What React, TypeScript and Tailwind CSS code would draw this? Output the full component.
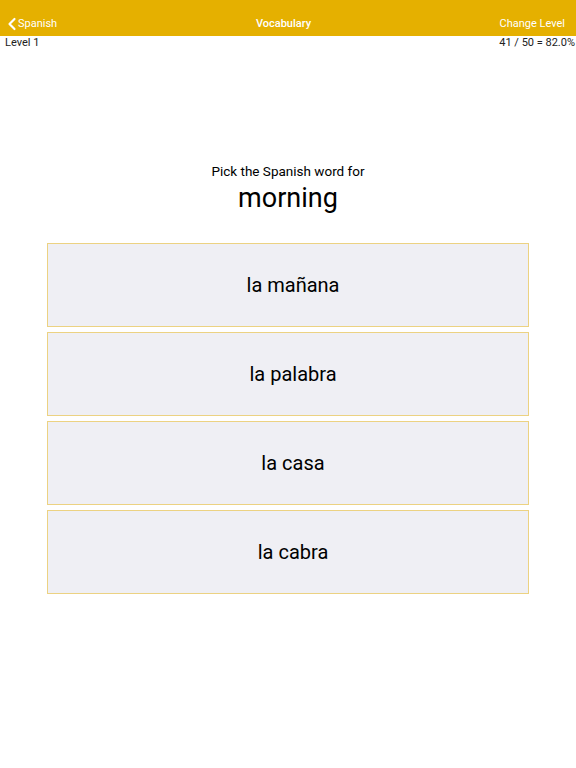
import { ChevronLeft } from 'lucide-react'

const CHOICES = ['la mañana', 'la palabra', 'la casa', 'la cabra']

export default function App() {
  return (
    <div className="min-h-[768px] bg-white text-black font-['Roboto',_'Inter',_sans-serif]">
      {/* Nav bar */}
      <div className="h-9 bg-[#e5b000] flex items-center pt-[11px] px-[2px] text-white text-[11px] leading-[13px]">
        <div className="flex-1 flex items-center">
          <ChevronLeft className="w-5 h-5 -mr-[4px]" strokeWidth={2.6} />
          <span>Spanish</span>
        </div>
        <div className="flex-1 text-center font-medium">Vocabulary</div>
        <div className="flex-1 text-right pr-[9px]">Change Level</div>
      </div>

      {/* Status row */}
      <div className="flex justify-between pl-[5px] pr-[1px] text-[11px] leading-[13px] text-[#222]">
        <span>Level 1</span>
        <span>41 / 50 = 82.0%</span>
      </div>

      {/* Prompt */}
      <div className="mt-[113px] flex flex-col items-center">
        <div className="text-[13.5px] leading-[18px]">Pick the Spanish word for</div>
        <div className="text-[27px] leading-[34px] mt-[1px]">morning</div>
      </div>

      {/* Choices */}
      <div className="mt-[28px] mx-[47px] flex flex-col gap-[5px]">
        {CHOICES.map(c => (
          <button
            key={c}
            className="h-[84px] bg-[#efeff4] border border-[#ecd282] pl-[10px] flex items-center justify-center text-[20px]"
          >
            {c}
          </button>
        ))}
      </div>
    </div>
  )
}
